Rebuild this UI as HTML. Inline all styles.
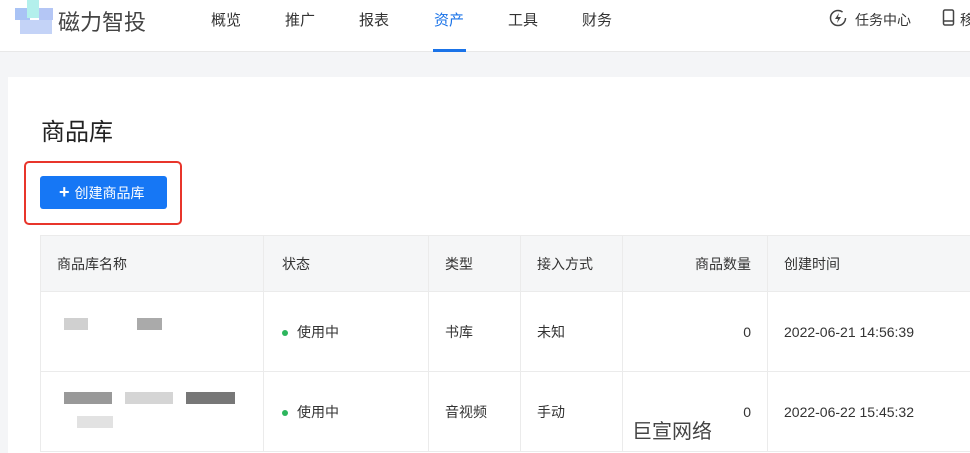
<!DOCTYPE html><html><head><meta charset="utf-8"><style>
*{margin:0;padding:0;box-sizing:border-box}
body{width:970px;height:453px;overflow:hidden;background:#f4f5f7;font-family:"Liberation Sans","Noto Sans CJK SC",sans-serif;position:relative;color:#333}
.hd{position:absolute;left:0;top:0;width:970px;height:52px;background:#fff;border-bottom:1px solid #e8e8e8}
.a{position:absolute;font-size:15px;top:9px;color:#333}
.card{position:absolute;left:8px;top:77px;width:962px;height:376px;background:#fff}
table{position:absolute;left:40px;top:235px;border-collapse:collapse;font-size:14px;color:#333;table-layout:fixed;width:960px}
td,th{border:1px solid #ebebeb;padding:0 16px;text-align:left;font-weight:normal}
th{background:#f5f6f7;height:56px}
td{height:80px}
.dot{display:inline-block;width:6px;height:6px;border-radius:3px;background:#2db55d;margin-right:9px;vertical-align:middle}
.px{position:absolute}
</style></head><body>
<div class="hd">
<div class="px" style="left:15px;top:8px;width:15px;height:12px;background:#a9c3f5"></div>
<div class="px" style="left:27px;top:0;width:12px;height:18px;background:#b3f0ec"></div>
<div class="px" style="left:39px;top:8px;width:14px;height:12px;background:#b4c6f5"></div>
<div class="px" style="left:20px;top:20px;width:32px;height:14px;background:#c4d3f7"></div>
<div class="a" style="left:58px;top:5px;font-size:22px;color:#444">磁力智投</div>
<div class="a" style="left:211px">概览</div>
<div class="a" style="left:285px">推广</div>
<div class="a" style="left:359px">报表</div>
<div class="a" style="left:434px;color:#1a73e8">资产</div>
<div class="px" style="left:433px;top:49px;width:33px;height:3px;background:#1a73e8"></div>
<div class="a" style="left:508px">工具</div>
<div class="a" style="left:582px">财务</div>
<svg class="px" style="left:829px;top:9px" width="18" height="18" viewBox="0 0 18 18"><circle cx="9" cy="9" r="7.5" fill="none" stroke="#444" stroke-width="1.5" stroke-dasharray="40 7"/><path d="M10 4L6 10h3l-1 4 4-6H9z" fill="#444"/></svg>
<div class="a" style="left:855px;font-size:14px;top:10px">任务中心</div>
<svg class="px" style="left:942px;top:9px" width="14" height="18" viewBox="0 0 14 18"><rect x="1.5" y="1" width="10" height="15" rx="1.5" fill="none" stroke="#444" stroke-width="1.5"/><line x1="2" y1="12" x2="11" y2="12" stroke="#444" stroke-width="1.5"/></svg>
<div class="a" style="left:960px;font-size:14px;top:10px">移</div>
</div>
<div class="card"></div>
<div class="px" style="left:41px;top:112px;font-size:24px;color:#222">商品库</div>
<div class="px" style="left:24px;top:161px;width:158px;height:64px;border:2px solid #e8352b;border-radius:5px"></div>
<div class="px" style="left:40px;top:176px;width:127px;height:33px;background:#1677f5;border-radius:3px;color:#fff;font-size:14px;line-height:33px;padding-left:19px"><span style="font-size:18px;font-weight:bold;margin-right:5px">+</span>创建商品库</div>
<table>
<colgroup><col style="width:223px"><col style="width:165px"><col style="width:92px"><col style="width:102px"><col style="width:145px"><col style="width:233px"></colgroup>
<tr><th>商品库名称</th><th style="padding-left:18px">状态</th><th>类型</th><th>接入方式</th><th style="text-align:right">商品数量</th><th>创建时间</th></tr>
<tr><td></td><td style="padding-left:18px"><span class="dot"></span>使用中</td><td>书库</td><td>未知</td><td style="text-align:right">0</td><td>2022-06-21 14:56:39</td></tr>
<tr><td></td><td style="padding-left:18px"><span class="dot"></span>使用中</td><td>音视频</td><td>手动</td><td style="text-align:right">0</td><td>2022-06-22 15:45:32</td></tr>
</table>
<div class="px" style="left:64px;top:318px;width:24px;height:12px;background:#d0d0d0"></div>
<div class="px" style="left:137px;top:318px;width:25px;height:12px;background:#aaa"></div>
<div class="px" style="left:64px;top:392px;width:48px;height:12px;background:#999"></div>
<div class="px" style="left:125px;top:392px;width:48px;height:12px;background:#d5d5d5"></div>
<div class="px" style="left:186px;top:392px;width:49px;height:12px;background:#777"></div>
<div class="px" style="left:77px;top:416px;width:36px;height:12px;background:#e2e2e2"></div>
<div class="px" style="left:632px;top:415px;font-size:20px;color:#444">巨宣网络</div>
</body></html>
